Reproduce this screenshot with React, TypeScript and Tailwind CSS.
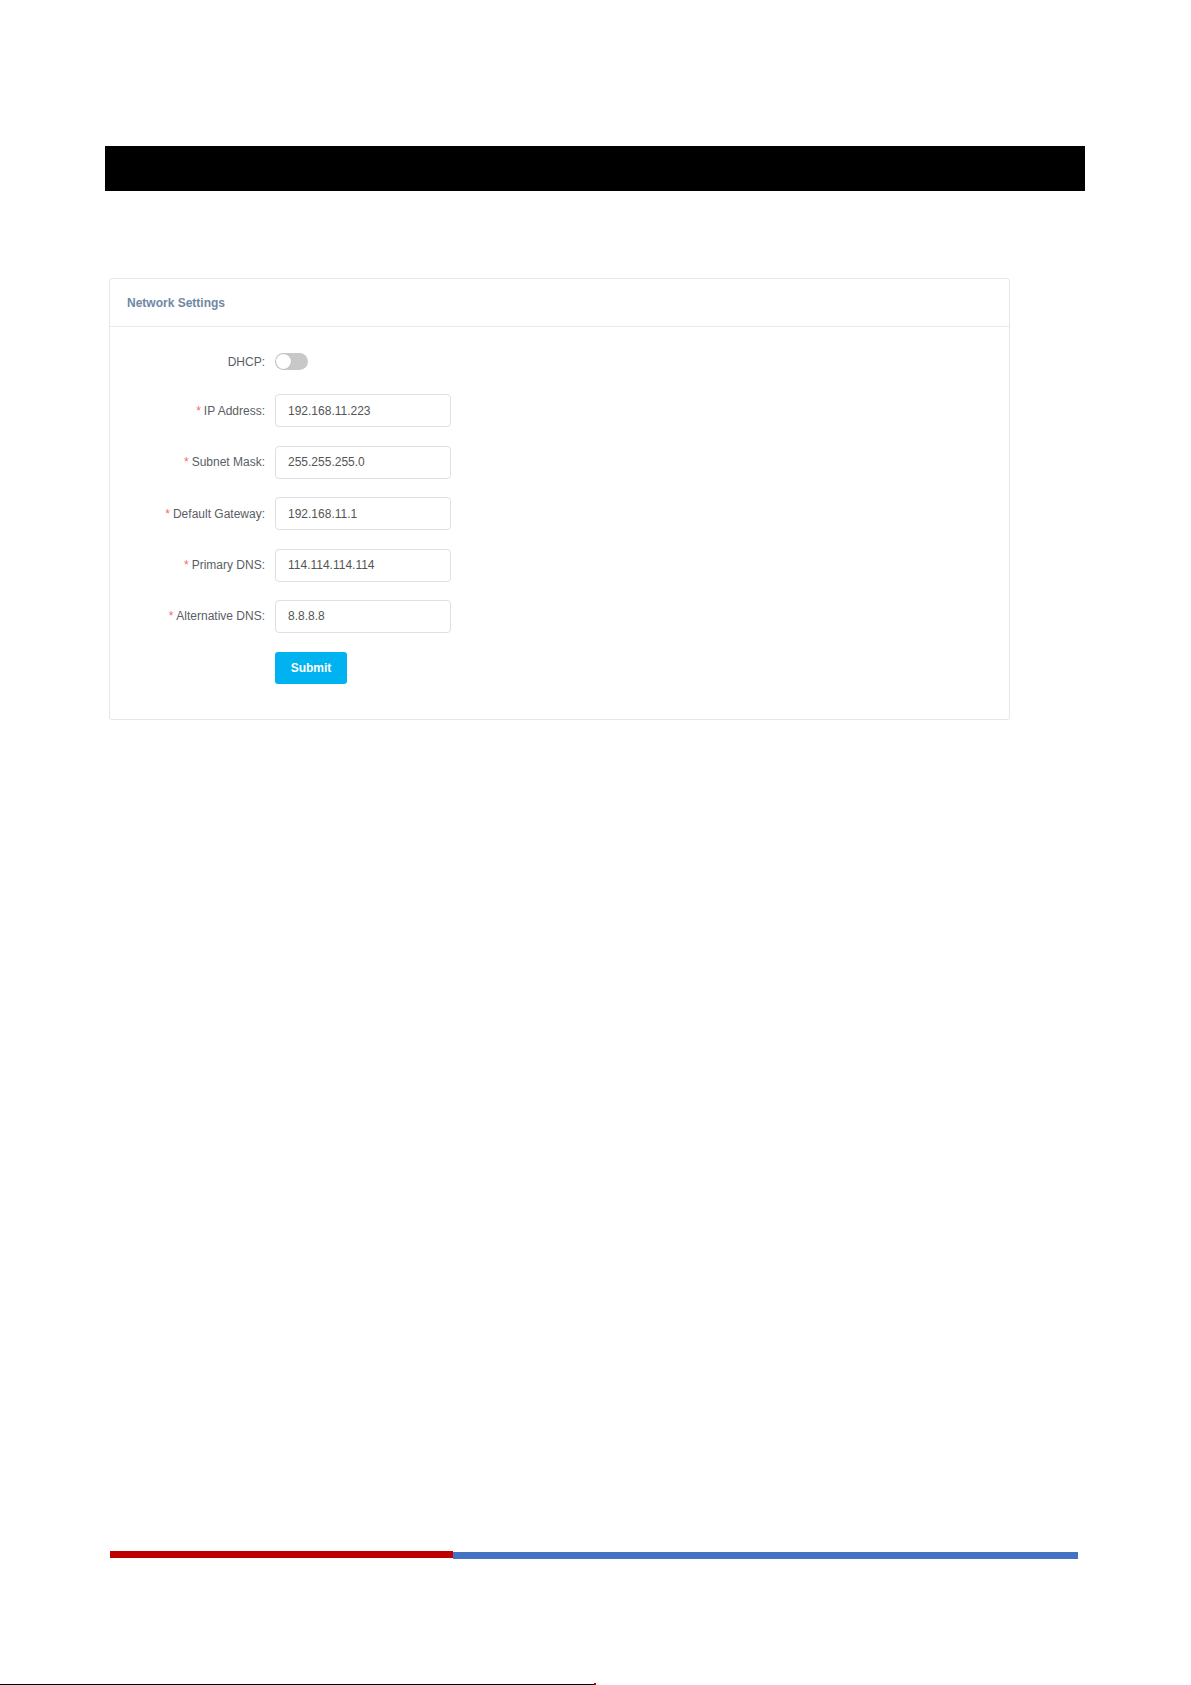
import React, { FC, useState } from 'react';

type Field = { label: string; value: string };

const fields: Field[] = [
    { label: 'IP Address', value: '192.168.11.223' },
    { label: 'Subnet Mask', value: '255.255.255.0' },
    { label: 'Default Gateway', value: '192.168.11.1' },
    { label: 'Primary DNS', value: '114.114.114.114' },
    { label: 'Alternative DNS', value: '8.8.8.8' },
];

const Toggle: FC<{ on: boolean; onChange: (v: boolean) => void }> = ({ on, onChange }) => (
    <button
        type="button"
        onClick={() => onChange(!on)}
        className={`relative w-[33px] h-[17px] rounded-full transition-colors ${on ? 'bg-[#00b2f0]' : 'bg-[#c8c8c8]'}`}
    >
        <span
            className={`absolute top-[1px] w-[15px] h-[15px] rounded-full bg-white shadow-[0_0_0_0.5px_#b8b8b8] transition-all ${on ? 'left-[17px]' : 'left-[1px]'}`}
        />
    </button>
);

const Row: FC<{ label: string; required?: boolean; children: React.ReactNode; h?: string }> = ({ label, required, children, h = 'h-[33px]' }) => (
    <div className={`flex items-center ${h}`}>
        <label className="w-[155px] text-right text-[12px] text-[#5a5e66]">
            {required && <span className="text-[#f56c6c] mr-[3px]">*</span>}
            {label}
        </label>
        <div className="ml-[10px] flex items-center h-full">{children}</div>
    </div>
);

const App: FC = () => {
    const [dhcp, setDhcp] = useState(false);
    const [values, setValues] = useState<string[]>(fields.map(f => f.value));

    return (
        <div className="relative w-[1191px] h-[1685px] bg-white overflow-hidden" style={{ fontFamily: '"Liberation Sans", Arial, sans-serif' }}>
            <div className="flex flex-col">
                <div className="mt-[146px] ml-[105px] w-[980px] h-[45px] bg-black" />

                <div className="mt-[87px] ml-[109px] w-[901px] border border-[#e6e6e8] rounded-[3px] bg-white">
                    <div className="h-[48px] flex items-center px-[17px] border-b border-[#ebebef]">
                        <h2 className="text-[12px] font-bold text-[#6e88a4]">Network Settings</h2>
                    </div>

                    <div className="pt-[20px] pb-[35px] flex flex-col gap-[18.4px]">
                        <Row label="DHCP:" h="h-[29px]">
                            <Toggle on={dhcp} onChange={setDhcp} />
                        </Row>
                        {fields.map((f, i) => (
                            <Row key={f.label} label={`${f.label}:`} required>
                                <input
                                    type="text"
                                    value={values[i]}
                                    onChange={e => setValues(prev => prev.map((v, j) => (j === i ? e.target.value : v)))}
                                    className="w-[176px] h-[33px] border border-[#dcdfe6] rounded-[4px] pl-[12px] text-[12px] text-[#555] outline-none"
                                />
                            </Row>
                        ))}
                        <Row label="">
                            <button type="button" className="w-[72px] h-[32px] bg-[#00b2f0] text-white text-[12px] font-bold rounded-[3px]">
                                Submit
                            </button>
                        </Row>
                    </div>
                </div>
            </div>

            {/* footer rule */}
            <div className="absolute left-[110px] top-[1551px] flex items-start">
                <div className="w-[343px] h-[7px] bg-[#c00000]" />
                <div className="w-[625px] h-[7px] mt-[1px] bg-[#4472c4]" />
            </div>
            <div className="absolute left-0 top-[1684px] w-[594px] h-[1px] bg-black" />
            <div className="absolute left-[594px] top-[1683px] w-[2px] h-[2px] bg-[#c00000]" />
        </div>
    );
};

export default App;
